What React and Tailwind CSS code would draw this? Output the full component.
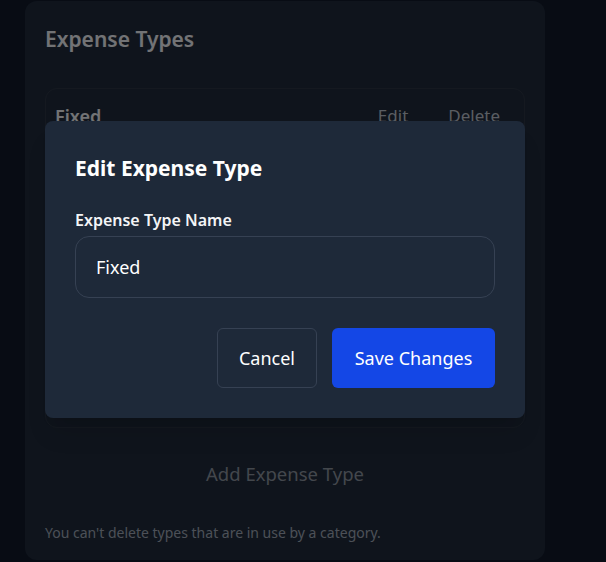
export default function App() {
  const rows = ["Fixed", "Variable", "Savings", "Debt", "Other"];
  return (
    <div className="relative min-h-[562px] w-full overflow-hidden bg-gray-900 font-['Noto_Sans',sans-serif]">
      <div className="ml-[25px] mt-px flex w-[520px] flex-col rounded-xl bg-gray-800 px-5 pb-[17px] pt-[24px]">
        <h2 className="text-[21px] font-semibold leading-7 text-gray-200">Expense Types</h2>
        <div className="mt-[35px] h-[340px] overflow-hidden rounded-xl border border-[#2b3341]">
          {rows.map((r) => (
            <div key={r} className="flex items-center px-[9px] py-[13px]">
              <span className="flex-1 text-lg font-semibold leading-7 text-gray-200">{r}</span>
              <button className="mr-[40px] text-[17px] leading-7 text-[#b4bac4]">Edit</button>
              <button className="mr-[15px] text-[17px] leading-7 text-[#b4bac4]">Delete</button>
            </div>
          ))}
        </div>
        <button className="mt-[32px] text-center text-[18.5px] leading-7 text-[#878e99]">Add Expense Type</button>
        <p className="mt-[35px] text-sm leading-5 text-gray-400">
          You can't delete types that are in use by a category.
        </p>
      </div>

      <div className="absolute inset-0 bg-black/50" />

      <div className="absolute left-[45px] top-[121px] flex w-[480px] flex-col rounded-lg bg-gray-800 px-[30px] pb-[30px] pt-[33px] shadow-xl">
        <h3 className="text-[21px] font-bold leading-7 text-white">Edit Expense Type</h3>
        <label className="mt-[26px] text-base font-semibold leading-6 text-gray-100">Expense Type Name</label>
        <input
          readOnly
          value="Fixed"
          className="mt-1 h-[62px] w-full rounded-[14px] border border-gray-700 bg-transparent px-5 text-lg text-white outline-none"
        />
        <div className="mt-[30px] flex justify-end gap-[15px]">
          <button className="h-[60px] w-[100px] rounded-md border border-gray-700 text-lg text-white">Cancel</button>
          <button className="h-[60px] w-[163px] rounded-md bg-blue-700 text-lg text-white">Save Changes</button>
        </div>
      </div>
    </div>
  );
}
